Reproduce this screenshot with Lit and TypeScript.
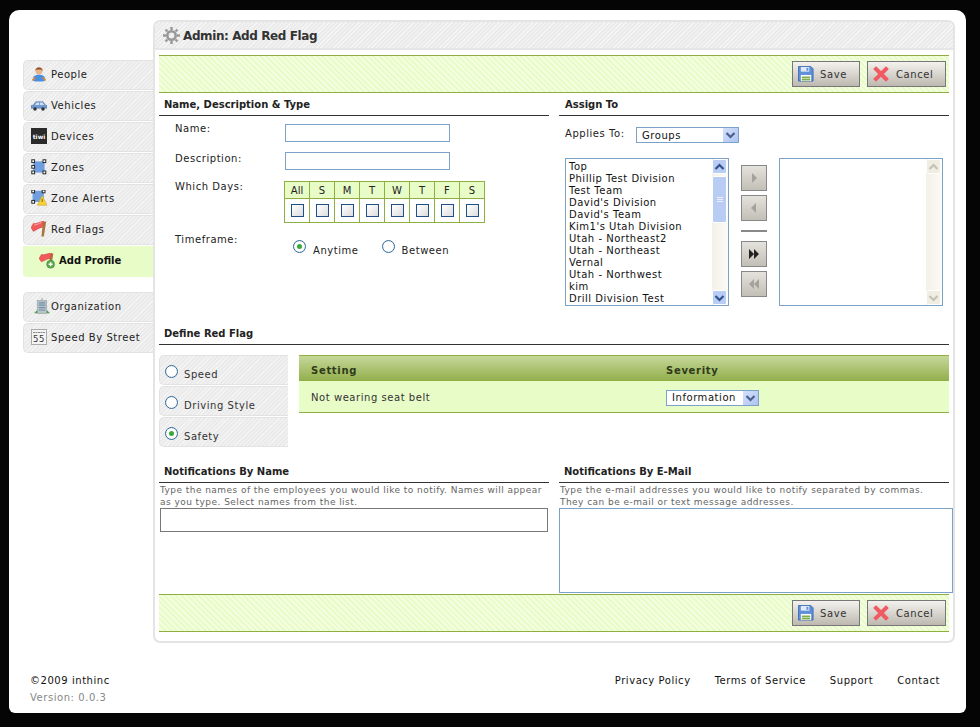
import { LitElement, html, css, svg } from "lit";
import { customElement } from "lit/decorators.js";

const icons: Record<string, unknown> = {
  people: svg`<circle cx="10" cy="6" r="4.500" fill="#e8b48c"/><path d="M5.500 6.500a4.500 4.500 0 0 1 9 0c-1-2.500-2.500-2-4.500-2s-3.500-.500-4.500 2z" fill="#8a4a22"/><path d="M2 18c0-5 3-7 8-7s8 2 8 7c-3 2-13 2-16 0z" fill="#4a90e0"/><path d="M2 18l3-4M18 18l-3-4" stroke="#e88a30" stroke-width="2"/>`,
  vehicles: svg`<path d="M0 14v-3l3-1 3-4h9l3 4 2 1v3z" fill="#6f9ad0" stroke="#4a6b9c" stroke-width=".7"/><path d="M7 7h3v3H5zM11 7h3.500l2 3H11z" fill="#cfe0f4"/><circle cx="5" cy="15" r="2.200" fill="#333"/><circle cx="15" cy="15" r="2.200" fill="#333"/>`,
  zones: svg`<rect x="3" y="3" width="14" height="14" fill="#6f9fe0"/><g fill="#fff" stroke="#222" stroke-width="1.200"><rect x="1" y="1" width="3.500" height="3.500"/><rect x="15" y="1" width="3.500" height="3.500"/><rect x="1" y="8" width="3.500" height="3.500"/><rect x="1" y="15" width="3.500" height="3.500"/><rect x="15" y="15" width="3.500" height="3.500"/></g>`,
  alerts: svg`<rect x="2" y="1" width="14" height="14" fill="#6f9fe0"/><g fill="#fff" stroke="#222" stroke-width="1.200"><rect x="1" y="0" width="3.500" height="3.500"/><rect x="14" y="0" width="3.500" height="3.500"/><rect x="1" y="13" width="3.500" height="3.500"/></g><path d="M14 7l6 12H8z" fill="#f5d33a" stroke="#c8a020" stroke-width=".7"/><path d="M14 11v4" stroke="#a06a10" stroke-width="1.500"/>`,
  flags: svg`<path d="M15 1l4-.500-3 19h-3z" fill="#a8763a"/><path d="M0 8l3-5c4 1 8-2 13-3l-2 8c-4 0-7 3-11 5z" fill="#f05a5a" stroke="#c83a3a" stroke-width=".6"/><path d="M4 5c3 0 6-2 9-3" stroke="#fbb" fill="none"/>`,
  add: svg`<path d="M14 1l4-.500-3 18h-2.500z" fill="#a8763a"/><path d="M0 7l3-5c4 1 8-2 13-2l-2 7c-4 0-7 3-11 4z" fill="#f05a5a" stroke="#c83a3a" stroke-width=".6"/><circle cx="14.500" cy="14" r="5" fill="#5aa84a" stroke="#3a8a3a" stroke-width=".6"/><path d="M14.500 11.500v5M12 14h5" stroke="#fff" stroke-width="1.800"/>`,
  org: svg`<path d="M0 19l4-4 3 2h6l3-2 4 4z" fill="#4fa04a"/><rect x="4" y="3" width="12" height="16" fill="#b8c4c8" stroke="#8a9498" stroke-width=".6"/><path d="M6 6h8M6 9h8M6 12h8M6 15h8" stroke="#6f8ea8" stroke-width="1.500"/><path d="M10 0v3" stroke="#8a9498"/>`,
  speed: svg`<rect x=".5" y=".5" width="15" height="15" fill="#f4f4f4" stroke="#aaa"/><path d="M2 3.500h12" stroke="#888" stroke-dasharray="2 .5"/><text x="8" y="13" font-size="8.500" text-anchor="middle" font-family="DejaVu Sans" fill="#333">55</text>`,
};

const disk = svg`<path d="M.5.5h13l2.500 2.500v13H.5z" fill="#5f8fd8" stroke="#3f6cb0"/><rect x="3" y="1" width="9" height="5" fill="#dfe9f7"/><rect x="9" y="2" width="2" height="3" fill="#5f8fd8"/><rect x="3" y="9.500" width="11" height="6.500" fill="#fff"/><path d="M4 12h9M4 14.500h9" stroke="#7fb04a" stroke-width="1.800"/>`;
const cross = svg`<path d="M3 3l10 10M13 3L3 13" stroke="#f05a62" stroke-width="4" stroke-linecap="square"/>`;
const gear = svg`<g fill="none" stroke="#999" stroke-width="2.600"><circle cx="8.500" cy="8.500" r="4.200"/><path stroke-width="2.400" d="M8.500 0v3M8.500 14v3M0 8.500h3M14 8.500h3M2.500 2.500l2 2M12.500 12.500l2 2M14.500 2.500l-2 2M4.500 12.500l-2 2"/></g>`;
const down = svg`<path d="M2.500 4l4 4 4-4" fill="none" stroke="currentColor" stroke-width="2.200"/>`;
const up = svg`<path d="M2.500 8l4-4 4 4" fill="none" stroke="currentColor" stroke-width="2.200"/>`;

const groups = ["Top", "Phillip Test Division", "Test Team", "David's Division", "David's Team", "Kim1's Utah Division", "Utah - Northeast2", "Utah - Northeast", "Vernal", "Utah - Northwest", "kim", "Drill Division Test"];
const days = ["All", "S", "M", "T", "W", "T", "F", "S"];

@customElement("app-root")
export class AppRoot extends LitElement {
  static styles = css`
    :host { display: block; font-family: "DejaVu Sans", Verdana, sans-serif; font-size: 10px; color: #222; letter-spacing: .55px; }
    * { box-sizing: border-box; }
    .page { width: 980px; height: 727px; background: #050505; padding: 10px 14px 14px 9px; }
    .shell { width: 957px; height: 703px; background: #fff; border-radius: 10px 10px 6px 6px; padding: 10px 11px 0 14px; display: grid; grid-template-columns: 130px 802px; grid-template-rows: 623px 1fr; }
    .side { padding-top: 40px; display: flex; flex-direction: column; }
    .nav { height: 30px; margin-bottom: 1px; display: flex; align-items: center; padding: 0 0 2px 7px; border: 1px solid #e2e2e2; border-right: 0; border-radius: 5px 0 0 5px; background: repeating-linear-gradient(135deg, #f4f4f4 0 1px, #ebebeb 1px 3px); }
    .nav svg { width: 16px; height: 16px; flex: none; }
    .nav svg.org { margin-left: 3px; }
    .nav.add { height: 31px; background: #e8fcc8; border: 0; font-weight: bold; color: #111; padding: 0 0 2px 16px; margin-bottom: 15px; border-radius: 0 0 0 4px; letter-spacing: 0; }
    .ico { width: 20px; display: flex; }
    .tiwi { width: 16px; height: 16px; background: #2a2a2a; color: #fff; font-size: 6px; font-weight: bold; letter-spacing: 0; display: flex; align-items: center; justify-content: center; margin-right: 4px; }
    .main { border: 2px solid #e4e4e4; border-radius: 7px; padding: 0 4px; width: 802px; }
    .title { height: 28px; margin: 0 -4px; display: flex; align-items: center; gap: 3px; padding: 1px 0 0 8px; border-bottom: 2px solid #e6e6e6; font-size: 12px; font-weight: bold; color: #333; letter-spacing: -.4px; background: repeating-linear-gradient(135deg, #f5f5f5 0 1px, #ebebeb 1px 3px); border-radius: 5px 5px 0 0; }
    .title svg { width: 17px; height: 17px; }
    .bar { height: 38px; margin-top: 5px; width: 790px; border-top: 1px solid #8fb040; border-bottom: 1px solid #8fb040; background: repeating-linear-gradient(45deg, #e8fcc8 0 2px, #f4fee0 2px 4px); display: flex; justify-content: flex-end; align-items: center; gap: 7px; padding-right: 3px; }
    .btn { height: 26px; border: 1px solid #777; background: linear-gradient(#f4f2ee, #bdb9b0); display: flex; align-items: center; color: #333; letter-spacing: .6px; }
    .btn svg { width: 16px; height: 16px; margin: 0 6px 0 5px; }
    .btn.save { width: 68px; }
    .btn.cancel { width: 79px; }
    .btn.cancel svg { margin: 0 7px 0 5px; }
    .cols { display: grid; grid-template-columns: 390px 390px; column-gap: 10px; width: 790px; }
    h3 { margin: 0; font-size: 10px; font-weight: bold; color: #222; height: 23px; padding: 6px 0 0 5px; border-bottom: 1px solid #333; letter-spacing: 0; line-height: 12px; }
    h3.ind { padding-left: 6px; }
    .top { height: 229px; }
    .row { display: grid; grid-template-columns: 110px 165px; padding-left: 16px; height: 28px; padding-top: 8px; }
    .row label { line-height: 10px; }
    .row.desc label { margin-top: 2px; }
    .row input { width: 165px; height: 18px; border: 1px solid #7da2c8; background: #fff; outline: 0; display: block; margin: 0; }
    .row.days { height: 52px; padding-top: 9px; grid-template-columns: 109px 202px; }
    .row.days label { margin-top: 1px; }
    .dt { display: grid; grid-template-columns: repeat(8, 25px); width: 201px; border: 1px solid #8fb040; border-right: 0; border-bottom: 0; height: 42px; }
    .dt div { border-right: 1px solid #8fb040; border-bottom: 1px solid #8fb040; display: flex; justify-content: center; align-items: center; }
    .dt .h { height: 17px; background: #e8fcc8; letter-spacing: 0; }
    .dt .c { height: 24px; }
    .cb { width: 13px; height: 13px; border: 1px solid #1f4f86; background: linear-gradient(135deg, #fff, #ddd); }
    .row.tf { grid-template-columns: 118px 1fr; width: 390px; height: 40px; padding-top: 11px; }
    .radios { display: flex; align-items: flex-start; padding-top: 5px; gap: 7px; }
    .radios span { padding-top: 5px; margin-right: 16px; }
    .rd { width: 13px; height: 13px; border-radius: 50%; border: 1px solid #336a9c; background: radial-gradient(circle, #fff 55%, #d8d8d8); flex: none; display: flex; align-items: center; justify-content: center; }
    .rd.on::after { content: ""; width: 5px; height: 5px; border-radius: 50%; background: #3aa83a; }
    .applies { display: flex; height: 42px; padding: 12px 0 0 6px; }
    .applies label { width: 71px; }
    .sel { height: 16px; border: 1px solid #7da2c8; background: #fff; display: flex; align-items: center; justify-content: space-between; padding-left: 5px; color: #111; }
    .sel i { width: 15px; height: 14px; background: linear-gradient(135deg, #d4e0fa, #aec4f2); color: #4a5f8c; display: flex; align-items: center; justify-content: center; }
    .sel svg { width: 13px; height: 12px; }
    .sel.groups { width: 103px; margin-top: -1px; }
    .sel.info { width: 93px; }
    .lists { display: grid; grid-template-columns: 164px 50px 164px; padding-left: 6px; }
    .lb { height: 148px; border: 1px solid #7da2c8; background: #fff; display: flex; justify-content: space-between; overflow: hidden; }
    .lb .items { padding: 2px 0 0 3px; line-height: 12px; color: #111; white-space: nowrap; letter-spacing: .5px; }
    .sb { width: 16px; flex: none; background: linear-gradient(90deg, #f3f1e8, #fbfaf5); display: flex; flex-direction: column; justify-content: space-between; position: relative; }
    .sb b { width: 15px; height: 15px; border: 1px solid #fff; background: #b8ccf4; border-radius: 2px; color: #33518a; display: flex; align-items: center; justify-content: center; }
    .sb.off b { background: #f0eee2; color: #c4c2b4; }
    .sb b svg { width: 13px; height: 12px; }
    .thumb { position: absolute; left: 0; top: 17px; width: 15px; height: 47px; background: #b8ccf4; border: 1px solid #fff; border-radius: 2px; display: flex; flex-direction: column; align-items: center; justify-content: center; gap: 1px; }
    .thumb u { display: block; width: 6px; height: 1px; background: #eef; }
    .mv { display: flex; flex-direction: column; align-items: center; padding: 7px 0 0; }
    .ar { width: 26px; height: 26px; border: 1px solid #888; background: linear-gradient(#e4e2dc, #c2bfb6); margin-bottom: 4px; display: flex; align-items: center; justify-content: center; color: #a4a29a; }
    .ar.dark { color: #222; }
    .ar svg { width: 14px; height: 12px; fill: currentColor; }
    .sep { width: 26px; height: 2px; background: #888; margin: 5px 0 9px; }
    .def { width: 790px; }
    .defb { display: grid; grid-template-columns: 129px 650px; column-gap: 11px; padding-top: 10px; height: 120px; }
    .tabs { display: flex; flex-direction: column; gap: 1px; }
    .tab { height: 30px; display: flex; align-items: center; gap: 6px; padding: 0 0 0 5px; background: repeating-linear-gradient(135deg, #f4f4f4 0 1px, #ebebeb 1px 3px); border: 1px solid #e2e2e2; border-right: 0; border-radius: 5px 0 0 5px; color: #333; }
    .tab .rd { margin-top: 3px; }
    .tab span { padding-top: 8px; }
    .tbl { height: 58px; }
    .thead, .trow { display: grid; grid-template-columns: 355px 1fr; padding-left: 12px; align-items: center; }
    .thead { height: 26px; background: linear-gradient(#c6d89a, #94b04e); border-top: 1px solid #8fb040; border-bottom: 1px solid #8fb040; font-weight: bold; color: #2e3a1a; letter-spacing: .7px; padding-top: 4px; }
    .trow { height: 32px; background: #e8fcc8; border-bottom: 1px solid #8fb040; color: #333; padding-top: 2px; }
    .nt { display: grid; grid-template-columns: 390px 394px; column-gap: 10px; width: 794px; }
    .nt h3 { width: 390px; height: 18px; padding-top: 1px; }
    .nt p { margin: 0; padding: 1px 0 0 1px; height: 25px; font-size: 9px; line-height: 12px; color: #666; width: 390px; letter-spacing: .45px; white-space: nowrap; }
    .ntb { height: 24px; width: 388px; margin-left: 1px; border: 1px solid #777; background: #fff; display: block; }
    .nta { height: 85px; width: 394px; border: 1px solid #7da2c8; background: #fff; display: block; resize: none; }
    .ncol { height: 124px; }
    .foot { grid-column: 1 / 3; display: flex; justify-content: space-between; padding: 32px 15px 0 7px; color: #111; }
    .foot .ver { color: #888; margin-top: 5px; }
    .foot div div { line-height: 12px; }
    .links { display: flex; gap: 24px; height: 12px; line-height: 12px; }
  `;

  nav(k: string, label: string) {
    return html`<div class="nav"><span class="ico"><svg class=${k} viewBox="0 0 20 20">${icons[k]}</svg></span>${label}</div>`;
  }

  btns() {
    return html`<div class="bar">
      <div class="btn save"><svg viewBox="0 0 17 17">${disk}</svg>Save</div>
      <div class="btn cancel"><svg viewBox="0 0 16 16">${cross}</svg>Cancel</div>
    </div>`;
  }

  render() {
    return html`<div class="page"><div class="shell">
      <div class="side">
        ${this.nav("people", "People")}
        ${this.nav("vehicles", "Vehicles")}
        <div class="nav"><span class="tiwi">tiwi</span>Devices</div>
        ${this.nav("zones", "Zones")}
        ${this.nav("alerts", "Zone Alerts")}
        ${this.nav("flags", "Red Flags")}
        <div class="nav add"><span class="ico"><svg viewBox="0 0 20 20">${icons.add}</svg></span>Add Profile</div>
        ${this.nav("org", "Organization")}
        <div class="nav"><span class="ico"><svg viewBox="0 0 16 16">${icons.speed}</svg></span>Speed By Street</div>
      </div>
      <div class="main">
        <div class="title"><svg viewBox="0 0 17 17">${gear}</svg>Admin: Add Red Flag</div>
        ${this.btns()}
        <div class="cols top">
          <div>
            <h3>Name, Description &amp; Type</h3>
            <div class="row"><label>Name:</label><input /></div>
            <div class="row desc"><label>Description:</label><input /></div>
            <div class="row days"><label>Which Days:</label>
              <div class="dt">
                ${days.map((d) => html`<div class="h">${d}</div>`)}
                ${days.map(() => html`<div class="c"><span class="cb"></span></div>`)}
              </div>
            </div>
            <div class="row tf"><label>Timeframe:</label>
              <div class="radios"><i class="rd on"></i><span>Anytime</span><i class="rd"></i><span>Between</span></div>
            </div>
          </div>
          <div>
            <h3 class="ind">Assign To</h3>
            <div class="applies"><label>Applies To:</label><div class="sel groups">Groups<i><svg viewBox="0 0 13 12">${down}</svg></i></div></div>
            <div class="lists">
              <div class="lb"><div class="items">${groups.map((g) => html`<div>${g}</div>`)}</div>
                <div class="sb"><b><svg viewBox="0 0 13 12">${up}</svg></b><span class="thumb"><u></u><u></u><u></u></span><b><svg viewBox="0 0 13 12">${down}</svg></b></div></div>
              <div class="mv">
                <div class="ar"><svg viewBox="0 0 14 12"><path d="M5 1l5 5-5 5z"/></svg></div>
                <div class="ar"><svg viewBox="0 0 14 12"><path d="M9 1L4 6l5 5z"/></svg></div>
                <div class="sep"></div>
                <div class="ar dark"><svg viewBox="0 0 14 12"><path d="M2 1l5 5-5 5zM7 1l5 5-5 5z"/></svg></div>
                <div class="ar"><svg viewBox="0 0 14 12"><path d="M7 1L2 6l5 5zM12 1L7 6l5 5z"/></svg></div>
              </div>
              <div class="lb"><div class="items"></div>
                <div class="sb off"><b><svg viewBox="0 0 13 12">${up}</svg></b><b><svg viewBox="0 0 13 12">${down}</svg></b></div></div>
            </div>
          </div>
        </div>
        <div class="def">
          <h3>Define Red Flag</h3>
          <div class="defb">
            <div class="tabs">
              <div class="tab"><i class="rd"></i><span>Speed</span></div>
              <div class="tab"><i class="rd"></i><span>Driving Style</span></div>
              <div class="tab"><i class="rd on"></i><span>Safety</span></div>
            </div>
            <div class="tbl">
              <div class="thead"><span>Setting</span><span>Severity</span></div>
              <div class="trow"><span>Not wearing seat belt</span><div class="sel info">Information<i><svg viewBox="0 0 13 12">${down}</svg></i></div></div>
            </div>
          </div>
        </div>
        <div class="nt">
          <div class="ncol">
            <h3>Notifications By Name</h3>
            <p>Type the names of the employees you would like to notify. Names will appear<br />as you type. Select names from the list.</p>
            <input class="ntb" />
          </div>
          <div class="ncol">
            <h3>Notifications By E-Mail</h3>
            <p>Type the e-mail addresses you would like to notify separated by commas.<br />They can be e-mail or text message addresses.</p>
            <textarea class="nta"></textarea>
          </div>
        </div>
        ${this.btns()}
      </div>
      <div class="foot">
        <div><div>©2009 inthinc</div><div class="ver">Version: 0.0.3</div></div>
        <div class="links"><span>Privacy Policy</span><span>Terms of Service</span><span>Support</span><span>Contact</span></div>
      </div>
    </div></div>`;
  }
}
